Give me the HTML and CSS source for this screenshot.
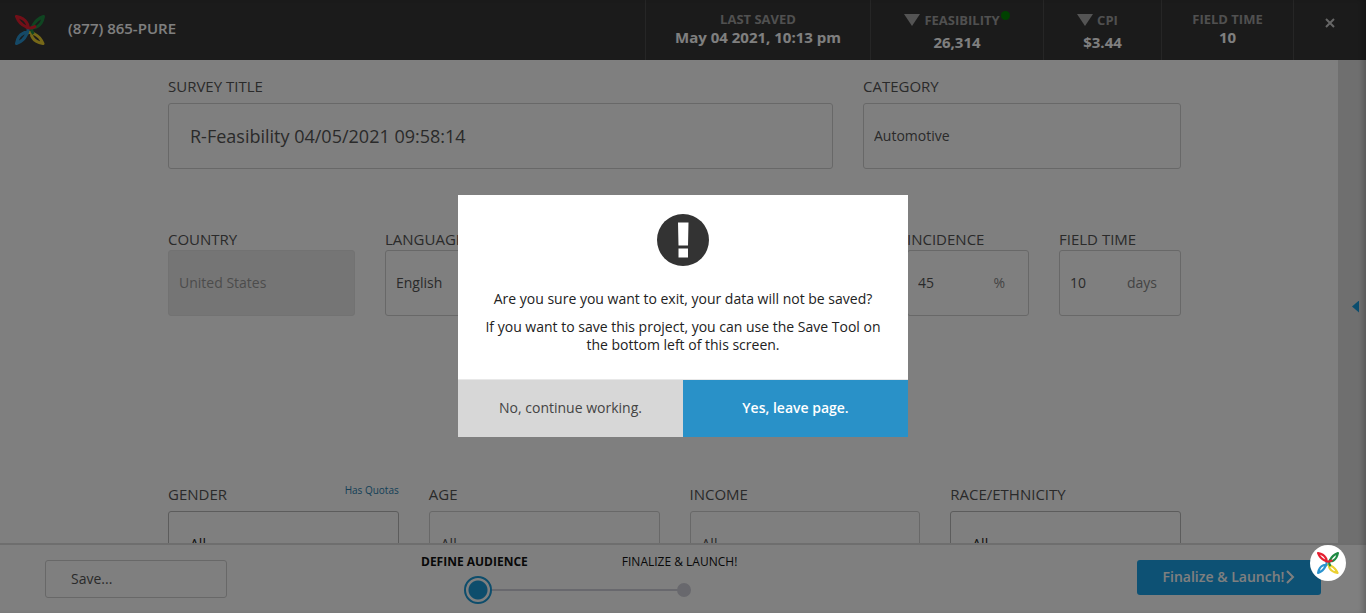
FILE: index.html
```html
<!DOCTYPE html>
<html lang="en">
<head>
<meta charset="utf-8">
<title>R-Feasibility</title>
<link rel="stylesheet" href="styles.css">
</head>
<body>
<svg class="defs" aria-hidden="true">
  <symbol id="logo" viewBox="0 0 30 30">
    <g fill="none" stroke-width="3" stroke-linejoin="round" stroke-linecap="butt">
      <path stroke="#ecd030" d="M11 18.500Q15 16 19.500 19Q25 21.500 28 28.500Q20 27 17.500 22.500Q15.800 20 17 17.500"/>
      <path stroke="#2a93cf" d="M12 11Q14.500 15 11.500 19.500Q8.500 26 1.500 28.500Q3 20.500 8 18.500Q10 17 13 17.500"/>
      <path stroke="#1f8a43" d="M18.500 19Q15 15 18 10.500Q21.500 4 28.500 1.500Q27 9 22.500 11.500Q20 13 17.500 12.500"/>
      <path stroke="#e51f30" d="M21 11Q15 14.800 10.500 11.500Q4 8.500 1.500 1.500Q9 3 11.500 7.500Q13.500 10 13 13"/>
    </g>
  </symbol>
</svg>

<div class="app">
  <header class="topbar">
    <svg class="brand" role="img" aria-label="Logo"><use href="#logo"/></svg>
    <span class="phone">(877) 865-PURE</span>
    <div class="stat stat-saved"><span class="stat-label">LAST SAVED</span><strong>May 04 2021, 10:13 pm</strong></div>
    <div class="stat stat-open stat-feasibility"><span class="stat-label"><i class="arrow"></i>FEASIBILITY<i class="status"></i></span><strong>26,314</strong></div>
    <div class="stat stat-open stat-cpi"><span class="stat-label"><i class="arrow"></i>CPI</span><strong>$3.44</strong></div>
    <div class="stat stat-time"><span class="stat-label">FIELD TIME</span><strong>10</strong></div>
    <button class="exit" type="button" aria-label="Exit"><svg viewBox="0 0 10 10"><path d="M1 1l8 8M9 1L1 9"/></svg></button>
  </header>

  <div class="workspace">
    <main class="form">
      <div class="row row-title">
        <div class="field"><label for="title">SURVEY TITLE</label><input id="title" class="control control-title" value="R-Feasibility 04/05/2021 09:58:14"></div>
        <div class="field"><label for="category">CATEGORY</label><select id="category" class="control"><option>Automotive</option></select></div>
      </div>
      <div class="row row-scope">
        <div class="field"><label for="country">COUNTRY</label><select id="country" class="control" disabled><option>United States</option></select></div>
        <div class="field"><label for="language">LANGUAGE</label><select id="language" class="control"><option>English</option></select></div>
        <div class="field field-incidence"><label for="incidence">INCIDENCE</label><div class="control unit-box"><input id="incidence" value="45"><span>%</span></div></div>
        <div class="field"><label for="time">FIELD TIME</label><div class="control unit-box"><input id="time" value="10"><span>days</span></div></div>
      </div>
      <div class="row row-audience">
        <div class="field"><div class="label-line"><label for="gender">GENDER</label><a href="#quotas">Has Quotas</a></div><button id="gender" class="control choice choice-wide" type="button">All</button></div>
        <div class="field"><label for="age">AGE</label><button id="age" class="control choice" type="button">All</button></div>
        <div class="field"><label for="income">INCOME</label><button id="income" class="control choice" type="button">All</button></div>
        <div class="field"><label for="race">RACE/ETHNICITY</label><button id="race" class="control choice choice-wide" type="button">All</button></div>
      </div>
    </main>
    <aside class="drawer"><button type="button" aria-label="Open panel"></button></aside>
  </div>

  <footer class="bottombar">
    <select class="save" aria-label="Save"><option>Save...</option></select>
    <ol class="steps">
      <li class="step current"><span>DEFINE AUDIENCE</span><i class="dot"></i></li>
      <li class="step"><span>FINALIZE &amp; LAUNCH!</span><i class="dot"></i></li>
    </ol>
    <button class="launch" type="button">Finalize &amp; Launch!<svg viewBox="0 0 9 14"><path d="M1 1l6 6-6 6"/></svg></button>
  </footer>
</div>

<div class="overlay">
  <section class="dialog" role="dialog" aria-modal="true" aria-labelledby="question">
    <div class="message">
      <svg class="alert" viewBox="0 0 52 52" aria-hidden="true"><circle cx="26" cy="26" r="26" fill="#333"/><path fill="#fff" d="M21 8.500h10.500l-.5 23H21.500zM21.500 34.500h9.500v9h-9.500z"/></svg>
      <p id="question">Are you sure you want to exit, your data will not be saved?</p>
      <p>If you want to save this project, you can use the Save Tool on the bottom left of this screen.</p>
    </div>
    <div class="actions">
      <button class="stay" type="button">No, continue working.</button>
      <button class="leave" type="button">Yes, leave page.</button>
    </div>
  </section>
</div>
<button class="chat" type="button" aria-label="Help"><svg><use href="#logo"/></svg></button>
</body>
</html>
```
FILE: styles.css
```css
* { box-sizing: border-box; }
body {
  margin: 0;
  font: 14px/18px "Open Sans", "Noto Sans", sans-serif;
  color: #555;
  background: #fff;
}
button, input, select { font: inherit; color: inherit; }
button, select { appearance: none; }
button { cursor: pointer; }
.defs { position: absolute; width: 0; height: 0; }

.app { display: flex; flex-direction: column; height: 100vh; overflow: hidden; isolation: isolate; }

.topbar { display: flex; flex: none; height: 60px; background: #363636; color: #fff; }
.brand { width: 30px; height: 30px; margin: 15px 23px 15px 15px; }
.phone { flex: 1; font-size: 15px; font-weight: 600; line-height: 56px; }
.stat {
  display: flex;
  flex-direction: column;
  align-items: center;
  padding-top: 10px;
  border-left: 1px solid #4c4c4c;
}
.stat strong { font-size: 15px; font-weight: 700; }
.stat-label { display: flex; align-items: center; font-size: 13px; font-weight: 700; color: #a0a0a0; position: relative; }
.stat-open { gap: 4px; padding-top: 11px; }
.stat-open .stat-label { padding-right: 10px; }
.stat-saved { width: 225px; }
.stat-feasibility { width: 173px; }
.stat-cpi { width: 118px; }
.stat-time { width: 132px; }
.arrow { margin-right: 4px; border: 8px solid transparent; border-top: 12px solid #a8a8a8; border-bottom: 0; }
.status { position: absolute; right: 0; top: 0; width: 9px; height: 9px; border-radius: 50%; background: #008200; }
.exit { width: 73px; height: 60px; padding: 0 0 15px; border: 0; border-left: 1px solid #4c4c4c; background: none; }
.exit svg { width: 10px; height: 10px; stroke: #ccc; stroke-width: 2; }

.workspace { display: flex; flex: 1; min-height: 0; overflow: hidden; }
.form { flex: 1; padding: 16px 157px 0 168px; min-width: 0; }
.row { display: grid; gap: 30px; }
.row-title { grid-template-columns: 665fr 318fr; height: 153px; align-content: start; }
.row-scope { grid-template-columns: 187fr 231fr 231fr 122fr 122fr; height: 255px; align-content: start; }
.row-audience { grid-template-columns: repeat(4, 1fr); }
.field { display: flex; flex-direction: column; gap: 7px; min-width: 0; }
.row-scope .field { gap: 1px; }
.field-incidence { grid-column: 4; }
.field label { font-size: 15px; line-height: 20px; }
.control { width: 100%; height: 66px; padding: 0 10px; border: 1px solid #d0d0d0; border-radius: 3px; background: #fff; }
.control:disabled { background: #ebebeb; border-color: #e4e4e4; color: #999; opacity: 1; }
.control-title { padding: 0 21px; font-size: 18px; }
.unit-box { display: flex; align-items: center; padding-right: 23px; }
.unit-box input { flex: 1; min-width: 0; padding: 0; border: 0; background: none; }
.unit-box span { color: #888; }
.label-line { display: flex; justify-content: space-between; }
.label-line a { font-size: 10px; line-height: 12px; color: #2a7fae; text-decoration: none; }
.choice { padding: 0 11px; text-align: left; }
.choice-wide { padding: 0 21px; border-color: #b8b8b8; color: #222; }

.drawer { display: flex; align-items: center; justify-content: flex-end; width: 28px; padding-top: 10px; background: #dfdfdf; }
.drawer button { width: 7px; height: 12px; margin: 0 7px 0 0; padding: 0; border: 0; background: #169bdc; clip-path: polygon(100% 0, 100% 100%, 0 50%); }

.bottombar {
  display: flex;
  flex: none;
  align-items: flex-start;
  height: 70px;
  padding: 0 45px;
  border-top: 2px solid #dcdcdc;
}
.save { width: 182px; height: 38px; margin-top: 15px; padding: 0 25px; border: 1px solid #d0d0d0; border-radius: 3px; background: #fff; }
.steps { display: flex; gap: 94px; margin: 8px auto 0 194px; padding: 0; list-style: none; font-size: 12px; color: #111; }
.step { display: flex; flex-direction: column; align-items: center; gap: 5px; position: relative; }
.current { font-weight: 700; }
.current::after { content: ""; position: absolute; left: 71px; right: -150px; bottom: 13px; height: 2px; background: #d0d0da; }
.dot { width: 14px; height: 14px; margin: 7px 0 7px 8px; border-radius: 50%; background: #d0d0da; z-index: 1; }
.current .dot { width: 28px; height: 28px; margin: 0 0 0 8px; border: 2px solid #1a9bd8; background: radial-gradient(circle, #1a9bd8 9px, #fff 10px); }
.launch {
  display: flex;
  align-items: center;
  justify-content: center;
  gap: 2px;
  width: 184px;
  height: 35px;
  margin-top: 15px;
  padding-bottom: 2px;
  border: 0;
  border-radius: 3px;
  background: #1ba3e8;
  color: #fff;
  font-weight: 600;
}
.launch svg { width: 9px; height: 14px; fill: none; stroke: currentColor; stroke-width: 2; }

.overlay {
  position: fixed;
  inset: 0;
  display: flex;
  align-items: flex-start;
  justify-content: center;
  padding-top: 195px;
  background: rgba(0, 0, 0, .5);
  box-shadow: inset -5px 0 6px -3px rgba(0, 0, 0, .25);
}
.dialog { width: 450px; background: #fff; color: #222; }
.message { padding: 19px 25px 25px; text-align: center; }
.alert { display: block; width: 52px; height: 52px; margin: 0 auto 24px; }
.message p { margin: 0 0 10px; }
.message p:last-child { margin: 0; }
.actions { display: grid; grid-template-columns: 1fr 1fr; border-top: 1px solid #e8e8e8; }
.actions button { height: 57px; padding-bottom: 3px; border: 0; }
.stay { background: #d7d7d7; color: #444; }
.leave { background: #2991c8; color: #fff; font-weight: 600; }

.chat {
  position: fixed;
  right: 20px;
  bottom: 32px;
  display: grid;
  place-items: center;
  width: 36px;
  height: 36px;
  padding: 0;
  border: 0;
  border-radius: 50%;
  background: #fff;
}
.chat svg { width: 22px; height: 22px; }
```
